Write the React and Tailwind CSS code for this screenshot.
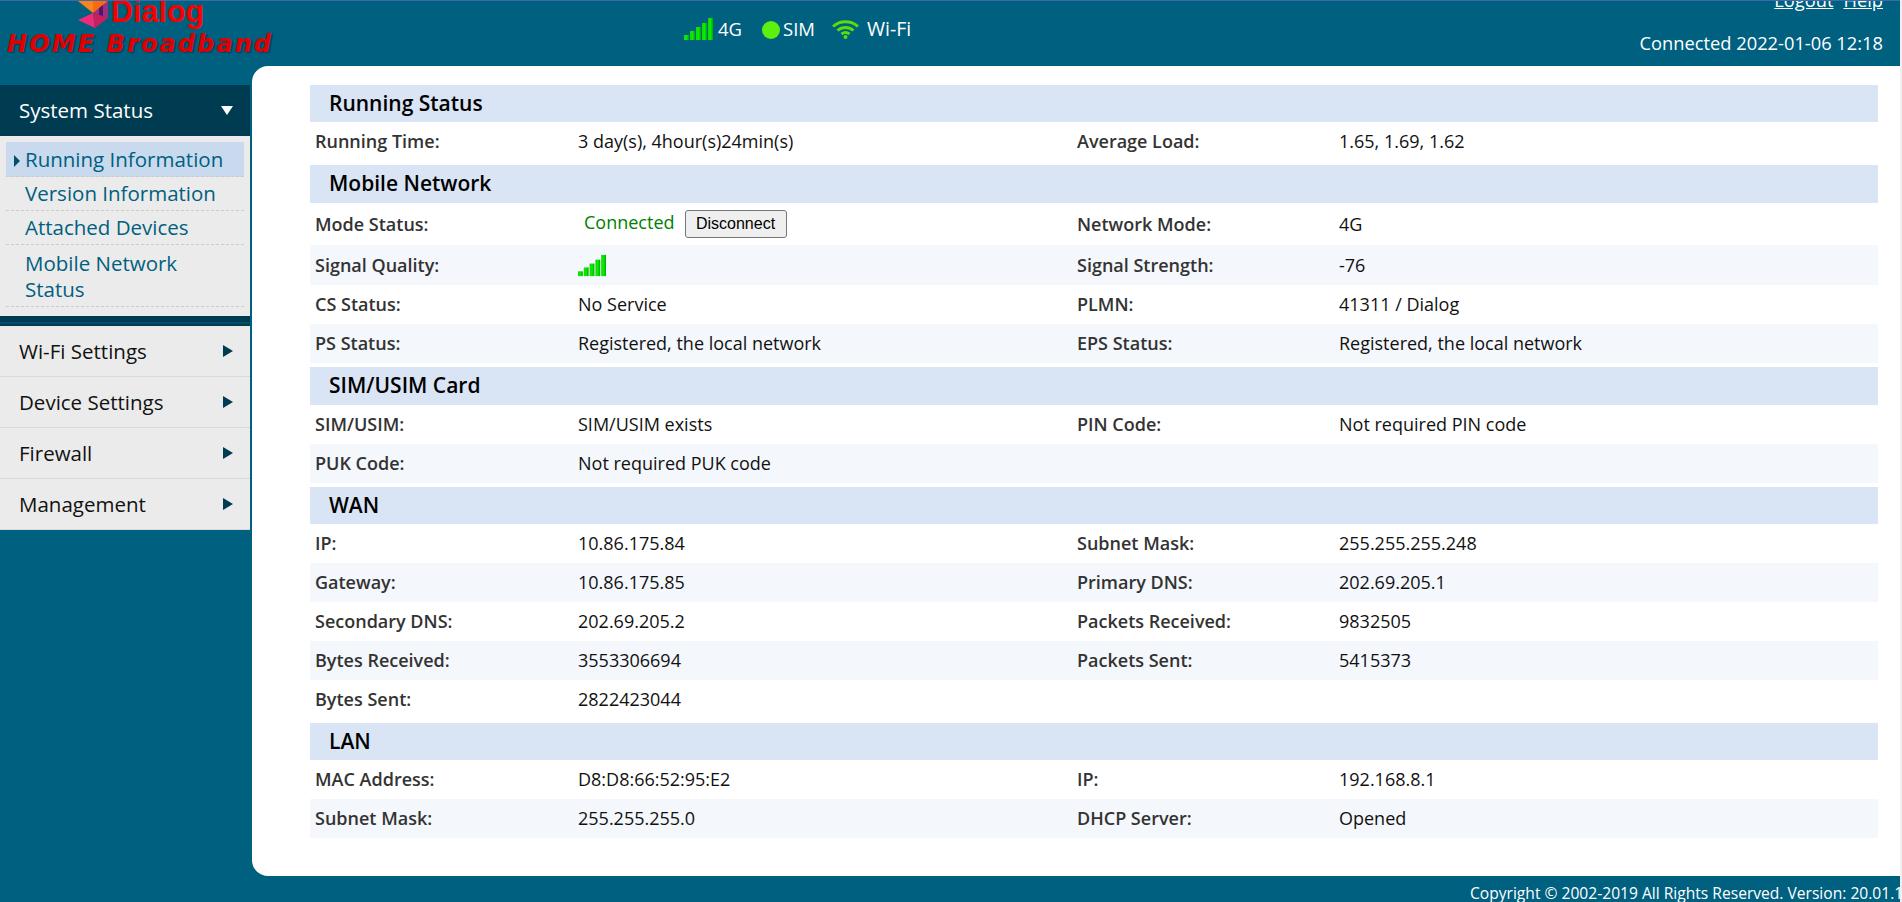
import React from 'react';

const sections = [
  {
    title: 'Running Status',
    headClass: 'h-[37px]',
    rows: [['Running Time:', '3 day(s), 4hour(s)24min(s)', 'Average Load:', '1.65, 1.69, 1.62']],
  },
  {
    title: 'Mobile Network',
    headClass: 'h-[38px]',
    rows: [
      ['Mode Status:', 'mode', 'Network Mode:', '4G'],
      ['Signal Quality:', 'signal', 'Signal Strength:', '-76'],
      ['CS Status:', 'No Service', 'PLMN:', '41311 / Dialog'],
      ['PS Status:', 'Registered, the local network', 'EPS Status:', 'Registered, the local network'],
    ],
  },
  {
    title: 'SIM/USIM Card',
    headClass: 'h-[38px]',
    rows: [
      ['SIM/USIM:', 'SIM/USIM exists', 'PIN Code:', 'Not required PIN code'],
      ['PUK Code:', 'Not required PUK code', '', ''],
    ],
  },
  {
    title: 'WAN',
    headClass: 'h-[37px]',
    rows: [
      ['IP:', '10.86.175.84', 'Subnet Mask:', '255.255.255.248'],
      ['Gateway:', '10.86.175.85', 'Primary DNS:', '202.69.205.1'],
      ['Secondary DNS:', '202.69.205.2', 'Packets Received:', '9832505'],
      ['Bytes Received:', '3553306694', 'Packets Sent:', '5415373'],
      ['Bytes Sent:', '2822423044', '', ''],
    ],
  },
  {
    title: 'LAN',
    headClass: 'h-[37px]',
    rows: [
      ['MAC Address:', 'D8:D8:66:52:95:E2', 'IP:', '192.168.8.1'],
      ['Subnet Mask:', '255.255.255.0', 'DHCP Server:', 'Opened'],
    ],
  },
];

function SignalBars({ className }) {
  return (
    <svg className={className} viewBox="0 0 29 22">
      <defs>
        <linearGradient id="barFill" x1="0" x2="1" y1="0" y2="0">
          <stop offset="0" stopColor="#20d010" />
          <stop offset="0.5" stopColor="#00f000" />
          <stop offset="1" stopColor="#00a800" />
        </linearGradient>
      </defs>
      <rect x="0" y="17" width="5" height="5" fill="url(#barFill)" />
      <rect x="6" y="13" width="5" height="9" fill="url(#barFill)" />
      <rect x="12" y="9" width="5" height="13" fill="url(#barFill)" />
      <rect x="18" y="5" width="5" height="17" fill="url(#barFill)" />
      <rect x="24" y="0" width="5" height="22" fill="url(#barFill)" />
    </svg>
  );
}

function WifiIcon() {
  return (
    <svg className="w-[27px] h-[20px] block" viewBox="0 0 27 20" fill="none" stroke="#5cdc0c" strokeWidth="3">
      <path d="M1 7.5C8 1 19 1 26 7.5" />
      <path d="M5.5 11.5C10 7.5 17 7.5 21.5 11.5" />
      <path d="M9.5 15C11.8 13.3 15.2 13.3 17.5 15" />
      <circle cx="13.5" cy="18" r="2" fill="#5cdc0c" stroke="none" />
    </svg>
  );
}

function DialogLogo() {
  return (
    <svg className="w-[32px] h-[29px] shrink-0 -mt-[1px]" viewBox="0 0 32 29">
      <polygon points="1,1 31,1 16,13" fill="#f7841e" />
      <polygon points="16,1 31,1 16,13" fill="#fb6a10" />
      <polygon points="31,1 31,18 16,13" fill="#a0307f" />
      <polygon points="22,8 26,5 26,16 22,15" fill="#4f1570" />
      <polygon points="1,20 16,13 18,28" fill="#ee2a7b" />
      <polygon points="16,13 31,18 18,28" fill="#c81f5e" />
    </svg>
  );
}

function ValueCell({ value }) {
  if (value === 'mode') {
    return (
      <div className="flex items-center pl-[11px]">
        <span className="text-[#008000] -mt-[4px]">Connected</span>
        <button className="ml-[10px] h-[28px] w-[102px] bg-[#efefef] border border-[#767676] rounded-[3px] text-[16px] text-black font-['Liberation_Sans',sans-serif]">
          Disconnect
        </button>
      </div>
    );
  }
  if (value === 'signal') return <SignalBars className="w-[28px] h-[23px] ml-[5px]" />;
  return <span className="pl-[5px]">{value}</span>;
}

function InfoRow({ row, index }) {
  let height = 'h-[39px]';
  if (row[1] === 'mode') height = 'h-[42px]';
  if (row[1] === 'signal') height = 'h-[40px]';
  return (
    <div className={`grid grid-cols-[263px_499px_262px_1fr] items-center text-[18px] text-[#111111] ${height} ${index % 2 === 1 ? 'bg-[#f4f7fb]' : ''}`}>
      <span className="pl-[5px] font-semibold text-[#333333]">{row[0]}</span>
      <ValueCell value={row[1]} />
      <span className="pl-[5px] font-semibold text-[#333333]">{row[2]}</span>
      <span className="pl-[5px]">{row[3]}</span>
    </div>
  );
}

function Section({ section }) {
  return (
    <section className="mb-[4px]">
      <h2 className={`${section.headClass} pl-[19px] flex items-center bg-[#d9e4f4] text-[21px] font-semibold text-black`}>{section.title}</h2>
      {section.rows.map((row, i) => (
        <InfoRow key={row[0]} row={row} index={i} />
      ))}
    </section>
  );
}

function Sidebar() {
  const subItem = 'h-[34px] border-b border-dashed border-[#cccccc] pl-[19px] flex items-center';
  return (
    <aside className="w-[252px] shrink-0 pt-[19px]">
      <div className="border-r-[2px] border-[#00607f] text-[20.5px]">
        <div className="h-[51px] bg-[#003c51] flex items-center justify-between pl-[19px] pr-[17px] text-white">
          System Status
          <span className="w-0 h-0 border-x-[6px] border-x-transparent border-t-[9px] border-t-white" />
        </div>
        <div className="bg-[#ebebeb] px-[6px] pt-[6px] pb-[9px] text-[#00607f]">
          <div className="relative h-[35px] bg-[#c9daef] border-b border-dashed border-[#cccccc] pl-[19px] flex items-center">
            <span className="absolute left-[8px] top-[13px] w-0 h-0 border-y-[6px] border-y-transparent border-l-[6px] border-l-[#00506c]" />
            Running Information
          </div>
          <div className={subItem}>Version Information</div>
          <div className={subItem}>Attached Devices</div>
          <div className="border-b border-dashed border-[#cccccc] pl-[19px] pt-[5px] pb-[4px] leading-[26px]">
            Mobile Network
            <br />
            Status
          </div>
        </div>
        <div className="h-[10px] bg-[#003c51] pt-[6px]">
          <div className="h-[2px] bg-[#00506c]" />
        </div>
        {['Wi-Fi Settings', 'Device Settings', 'Firewall', 'Management'].map(item => (
          <div key={item} className="h-[51px] bg-[#ebebeb] border-b border-[#d9d9d9] flex items-center justify-between pl-[19px] pr-[17px] text-[#111111]">
            {item}
            <span className="w-0 h-0 border-y-[6px] border-y-transparent border-l-[10px] border-l-[#003c51]" />
          </div>
        ))}
      </div>
    </aside>
  );
}

export default function App() {
  return (
    <div className="h-[902px] w-[1902px] overflow-hidden bg-[#f0f0f0] font-['Open_Sans','Noto_Sans',sans-serif]">
      <div className="w-[1900px] h-full bg-[#00607f] flex flex-col">
        <header className="h-[66px] shrink-0 border-t border-[#3f68a8] flex overflow-hidden text-white">
          <div className="w-[684px] pl-[7px]">
            <div className="flex items-start h-[30px] pl-[70px]">
              <DialogLogo />
              <span className="ml-[2px] -mt-[6px] text-[30.5px] font-bold text-[#f80000] leading-[32px] font-['Liberation_Sans',sans-serif]">Dialog</span>
            </div>
            <div className="italic font-bold text-[24px] leading-[26px] tracking-[2.1px] text-[#e00000] whitespace-nowrap [text-shadow:2px_1px_1px_#004060] font-['DejaVu_Sans',sans-serif]">
              HOME Broadband
            </div>
          </div>
          <div className="flex items-start pt-[15px] text-[18.5px] leading-[26px]">
            <SignalBars className="w-[29px] h-[22px] mt-[2px]" />
            <span className="ml-[5px]">4G</span>
            <span className="ml-[20px] mt-[5px] w-[18px] h-[18px] rounded-full bg-[#5cf010]" />
            <span className="ml-[3px]">SIM</span>
            <span className="ml-[17px] mt-[3px]"><WifiIcon /></span>
            <span className="ml-[8px] text-[19.5px]">Wi-Fi</span>
          </div>
          <div className="ml-auto pr-[17px] text-right text-[18.3px]">
            <div className="-mt-[13px] leading-[24px]">
              <a className="underline">Logout</a>
              <a className="underline ml-[10px]">Help</a>
            </div>
            <div className="mt-[18px] leading-[26px]">Connected 2022-01-06 12:18</div>
          </div>
        </header>
        <div className="flex flex-1 min-h-0">
          <Sidebar />
          <main className="flex-1 bg-white rounded-l-[16px] pl-[58px] pr-[22px] pt-[19px]">
            {sections.map(section => (
              <Section key={section.title} section={section} />
            ))}
          </main>
        </div>
        <footer className="h-[26px] shrink-0 pl-[1470px] text-[15.6px] leading-[34px] text-white whitespace-nowrap overflow-hidden">
          Copyright © 2002-2019 All Rights Reserved. Version: 20.01.1
        </footer>
      </div>
    </div>
  );
}
